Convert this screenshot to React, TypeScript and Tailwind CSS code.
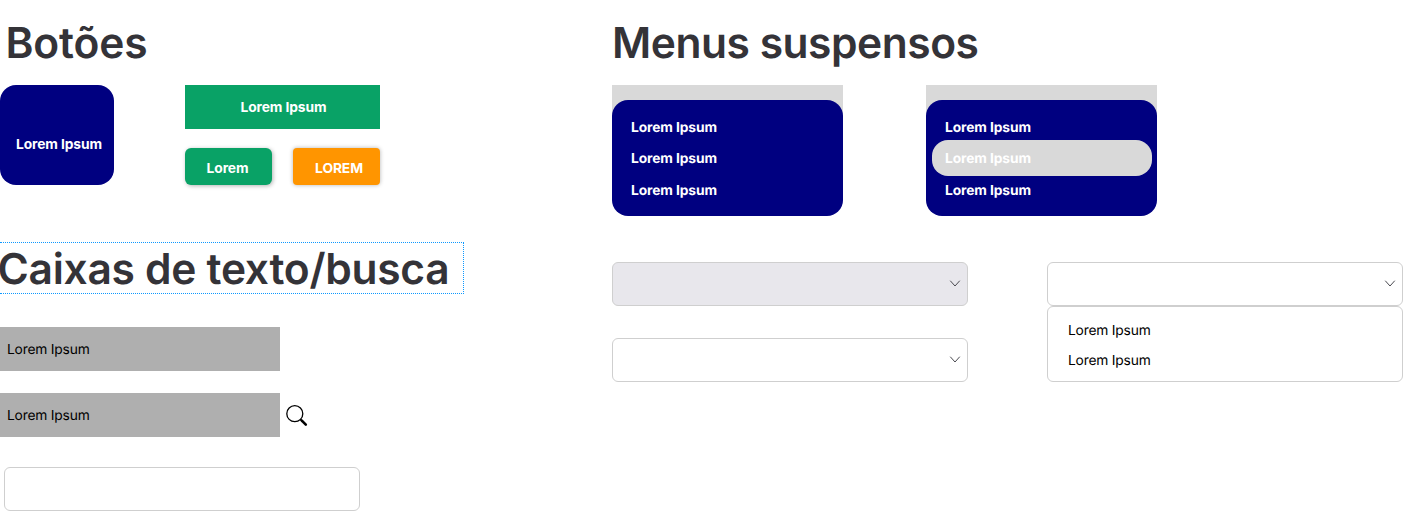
import type { ReactNode } from "react";

function Heading({ children, className = "" }: { children: ReactNode; className?: string }) {
  return (
    <h1 className={`whitespace-nowrap text-[42.5px] leading-[52px] font-semibold text-[#343338] ${className}`}>
      {children}
    </h1>
  );
}

function Chevron() {
  return (
    <svg className="h-[6px] w-[10px] overflow-visible" viewBox="0 0 10 6" fill="none" stroke="#4a4a50" strokeWidth="1" strokeLinecap="round" strokeLinejoin="round">
      <path d="M0.5 0 5 5 9.5 0" />
    </svg>
  );
}

function SearchIcon() {
  return (
    <svg className="mt-[2px] h-[22px] w-[22px]" viewBox="0 0 22 22" fill="none" stroke="#000">
      <circle cx="8.8" cy="8.7" r="8" strokeWidth="1.3" />
      <path d="M14.4 14.3 16.6 16.5" strokeWidth="1.8" />
      <path d="M15.8 15.7 19.8 19.7" strokeWidth="2.6" strokeLinecap="round" />
    </svg>
  );
}

function Select({ filled = false }: { filled?: boolean }) {
  return (
    <div className={`flex h-11 w-[356px] items-center justify-end rounded-[6px] border border-[#cfcfcf] pr-[7px] ${filled ? "bg-[#e8e7ec]" : "bg-white"}`}>
      <Chevron />
    </div>
  );
}

function Menu({ active }: { active?: number }) {
  return (
    <div className="w-[231px] bg-[linear-gradient(#d9d9d9_0_35px,transparent_35px)] pt-[15px]">
      <ul className="flex h-[116px] flex-col rounded-[16px] bg-[#000080] px-[5.5px] pt-[11px] text-[13.8px] font-bold tracking-[-0.11px] text-white">
        {[0, 1, 2].map((i) => (
          <li
            key={i}
            className={`flex w-[220px] items-center rounded-[16px] pl-[13.5px] ${i === active ? "-my-[2.25px] h-[36px] bg-[#d9d9d9] pt-[2px]" : "h-[31.5px] pt-[2.5px]"}`}
          >
            Lorem Ipsum
          </li>
        ))}
      </ul>
    </div>
  );
}

function TextBox() {
  return (
    <div className="flex h-11 w-[280px] items-center bg-[#afafaf] pt-[2px] pl-[7px] text-[13.8px] tracking-[-0.2px] text-black">
      Lorem Ipsum
    </div>
  );
}

export default function App() {
  return (
    <div className="flex h-[513px] w-[1416px] overflow-hidden bg-white font-['Inter',sans-serif] leading-[17px] [text-rendering:geometricPrecision]">
      <section className="flex w-[612px] shrink-0 flex-col items-start pt-[18px]">
        <Heading className="ml-[5.5px] tracking-[-0.15px]">Botões</Heading>
        <div className="mt-[15px] flex gap-[71px] text-[13.8px] font-bold tracking-[-0.11px] text-white">
          <button className="flex h-[100px] w-[114px] items-center justify-center rounded-[16px] bg-[#000080] pt-[18px] pl-[4px] whitespace-nowrap">
            Lorem Ipsum
          </button>
          <div className="flex w-[195px] flex-col justify-between">
            <button className="flex h-11 items-center justify-center bg-[#09a266] pl-[2px]">Lorem Ipsum</button>
            <div className="flex justify-between">
              <button className="flex h-[37px] w-[87px] items-center justify-center rounded-[6px] bg-[#09a266] pt-[3px] pr-[2px] shadow-[1px_1px_4px_rgba(0,0,0,0.3)]">Lorem</button>
              <button className="flex h-[37px] w-[87px] items-center justify-center rounded-[4px] bg-[#ff9500] pt-[3px] pl-[5px] shadow-[0_0_4px_rgba(0,0,0,0.3)]">LOREM</button>
            </div>
          </div>
        </div>
        <div className="mt-[57px] h-[52px] w-[464px] border-y border-r border-dotted border-[#0d99ff]">
          <Heading className="-ml-[2.5px] pt-px tracking-[-0.27px]">Caixas de texto/busca</Heading>
        </div>
        <div className="mt-[33px] flex flex-col gap-[22px]">
          <TextBox />
          <div className="flex items-center gap-[6px]">
            <TextBox />
            <SearchIcon />
          </div>
        </div>
        <div className="mt-[30px] ml-[3.5px] h-[44px] w-[356px] shrink-0 rounded-[6px] border border-[#cfcfcf]" />
      </section>

      <section className="flex flex-col items-start pt-[18px]">
        <Heading className="tracking-[-0.46px]">Menus suspensos</Heading>
        <div className="mt-[15px] flex gap-[83px]">
          <Menu />
          <Menu active={1} />
        </div>
        <div className="mt-[46px] flex gap-[79px]">
          <div className="flex flex-col gap-[32px]">
            <Select filled />
            <Select />
          </div>
          <div>
            <Select />
            <ul className="flex h-[76px] w-[356px] flex-col gap-[13px] rounded-[6px] border border-[#cfcfcf] pt-[16px] pl-5 text-[13.8px] tracking-[-0.2px] text-black">
              <li>Lorem Ipsum</li>
              <li>Lorem Ipsum</li>
            </ul>
          </div>
        </div>
      </section>
    </div>
  );
}
